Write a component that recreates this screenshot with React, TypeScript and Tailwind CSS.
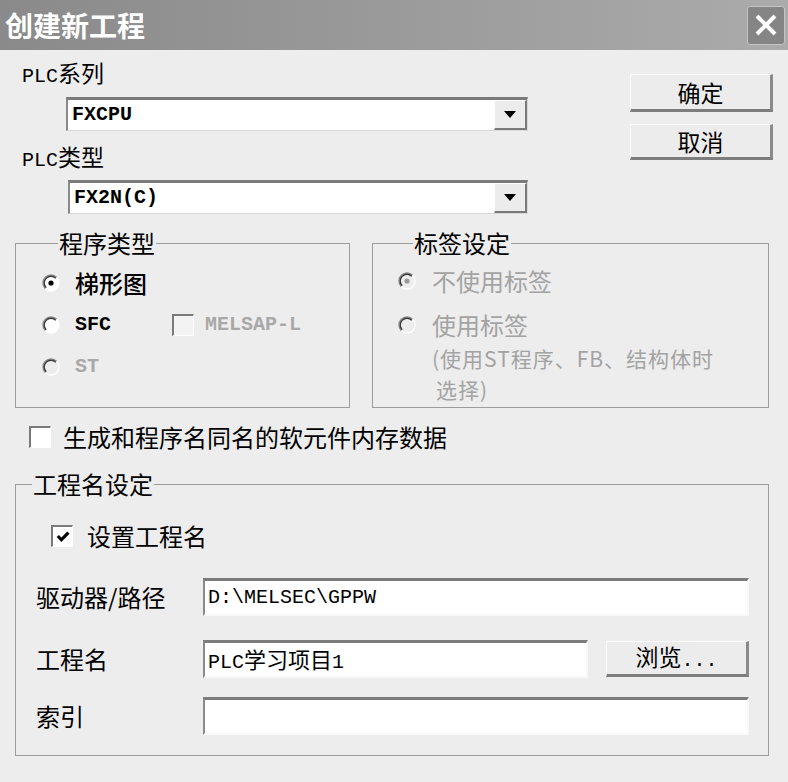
import React from "react";

const MONO = "font-['Liberation_Mono',monospace]";

function Radio({ checked = false, disabled = false }: { checked?: boolean; disabled?: boolean }) {
  return (
    <svg width="18" height="18" viewBox="0 0 18 18" className="shrink-0">
      <circle cx="9" cy="9" r="8" fill={disabled ? "#ededed" : "#ffffff"} />
      <path d="M14.66 3.34 A8 8 0 0 0 3.34 14.66" stroke="#8a8a8a" strokeWidth="1.4" fill="none" />
      <path d="M13.81 4.19 A6.8 6.8 0 0 0 4.19 13.81" stroke="#3c3c3c" strokeWidth="1.4" fill="none" />
      <path d="M3.34 14.66 A8 8 0 0 0 14.66 3.34" stroke="#ffffff" strokeWidth="1.4" fill="none" />
      {checked && <circle cx="9" cy="9" r="2.6" fill={disabled ? "#9a9a9a" : "#000000"} />}
    </svg>
  );
}

function Check({ checked = false, disabled = false }: { checked?: boolean; disabled?: boolean }) {
  return (
    <div
      className={`w-[22px] h-[22px] shrink-0 flex items-center justify-center border-t-2 border-l-2 border-t-[#7a7a7a] border-l-[#7a7a7a] border-b border-r border-b-white border-r-white ${
        disabled ? "bg-[#f3f3f3]" : "bg-white"
      }`}
    >
      {checked && (
        <svg width="14" height="14" viewBox="0 0 14 14">
          <path d="M1.8 6 L5.4 9.8 L12.4 2.6" stroke="#000000" strokeWidth="3.2" fill="none" />
        </svg>
      )}
    </div>
  );
}

function Select({ value, className }: { value: string; className: string }) {
  return (
    <div
      className={`h-[34px] flex bg-white border-t-[3px] border-l-[2px] border-t-[#7a7a7a] border-l-[#8a8a8a] border-b border-r border-b-[#d8d8d8] border-r-[#d8d8d8] ${className}`}
    >
      <div className={`flex-1 flex items-center pl-[4px] text-[20px] font-bold leading-none ${MONO}`}>{value}</div>
      <div className="w-[33px] h-full flex items-center justify-center bg-[#ececec] border-t border-l border-t-white border-l-white border-b-2 border-r-2 border-b-[#7a7a7a] border-r-[#7a7a7a]">
        <svg width="12" height="7" viewBox="0 0 12 7">
          <path d="M0 0 H12 L6 7 Z" fill="#000000" />
        </svg>
      </div>
    </div>
  );
}

function Btn({ children, className }: { children: React.ReactNode; className: string }) {
  return (
    <div
      className={`flex items-center justify-center bg-[#ececec] border-t border-l border-t-white border-l-white border-b-[3px] border-r-[3px] border-b-[#7d7d7d] border-r-[#8a8a8a] text-[23px] leading-none ${className}`}
    >
      {children}
    </div>
  );
}

function Input({ children, className }: { children?: React.ReactNode; className: string }) {
  return (
    <div
      className={`h-[38px] flex items-center pl-[3px] bg-white border-t-[3px] border-l-[2px] border-t-[#7b7b7b] border-l-[#8a8a8a] border-b-2 border-r-2 border-b-[#f8f8f8] border-r-[#f8f8f8] text-[20px] leading-none ${className}`}
    >
      {children}
    </div>
  );
}

export default function App() {
  return (
    <div className="w-[788px] h-[782px] overflow-hidden bg-[#ededed] text-black font-['Noto_Sans_CJK_SC',sans-serif]">
      {/* Title bar */}
      <div className="h-[50px] flex items-center justify-between pl-[5px] pr-[3px] bg-gradient-to-r from-[#8a8a8a] to-[#ababab]">
        <span className="text-white text-[28px] font-bold leading-none">创建新工程</span>
        <div className="w-[38px] h-[39px] flex items-center justify-center rounded-[3px] border border-[#c4c4c4] bg-[#858585]">
          <svg width="24" height="24" viewBox="0 0 24 24">
            <path d="M3 3 L21 21 M21 3 L3 21" stroke="#ffffff" strokeWidth="4" />
          </svg>
        </div>
      </div>

      {/* Top section */}
      <div className="flex">
        <div className="w-[540px] pl-[22px] pt-[12px]">
          <div className="h-[24px] flex items-center text-[23px] leading-none">
            <span>
              <span className={`${MONO} text-[20px]`}>PLC</span>系列
            </span>
          </div>
          <Select className="ml-[44px] mt-[11px] w-[462px]" value="FXCPU" />
          <div className="mt-[15px] h-[24px] flex items-center text-[23px] leading-none">
            <span>
              <span className={`${MONO} text-[20px]`}>PLC</span>类型
            </span>
          </div>
          <Select className="ml-[46px] mt-[10px] w-[460px]" value="FX2N(C)" />
        </div>
        <div className="pl-[90px] pt-[24px] flex flex-col gap-[12px]">
          <Btn className="w-[143px] h-[38px]">确定</Btn>
          <Btn className="w-[143px] h-[36px]">取消</Btn>
        </div>
      </div>

      {/* Group boxes row */}
      <div className="flex gap-[22px] pl-[15px] mt-[16px]">
        <fieldset className="w-[335px] h-[178px] border border-[#9c9c9c] pl-[26px]">
          <legend className="ml-[16px] px-[1px] h-[26px] text-[24px] leading-[26px]">程序类型</legend>
          <div className="pt-[12px] flex flex-col gap-[12px]">
            <div className="h-[30px] flex items-center gap-[15px]">
              <Radio checked />
              <span className="text-[24px] leading-none font-medium">梯形图</span>
            </div>
            <div className="h-[30px] flex items-center">
              <div className="w-[130px] flex items-center gap-[15px]">
                <Radio />
                <span className={`${MONO} text-[20px] font-bold leading-none`}>SFC</span>
              </div>
              <Check disabled />
              <span className={`${MONO} ml-[11px] text-[20px] font-bold leading-none text-[#a8a8a8]`}>MELSAP-L</span>
            </div>
            <div className="h-[30px] flex items-center gap-[15px]">
              <Radio disabled />
              <span className={`${MONO} text-[20px] font-bold leading-none text-[#a8a8a8]`}>ST</span>
            </div>
          </div>
        </fieldset>

        <fieldset className="w-[397px] h-[178px] border border-[#9c9c9c] pl-[25px]">
          <legend className="ml-[15px] px-[1px] h-[26px] text-[24px] leading-[26px]">标签设定</legend>
          <div className="pt-[10px] flex flex-col text-[#a3a3a3]">
            <div className="h-[30px] flex items-center gap-[16px]">
              <Radio checked disabled />
              <span className="text-[24px] leading-none">不使用标签</span>
            </div>
            <div className="mt-[14px] h-[30px] flex items-center gap-[16px]">
              <Radio disabled />
              <span className="text-[24px] leading-none">使用标签</span>
            </div>
            <div className="pl-[34px] text-[21px] leading-[31px] tracking-[1px] mt-[3px]">
              <div>(使用ST程序、FB、结构体时</div>
              <div className="pl-[4px]">选择)</div>
            </div>
          </div>
        </fieldset>
      </div>

      {/* Checkbox row */}
      <div className="mt-[14px] h-[30px] pl-[29px] flex items-center gap-[12px]">
        <Check />
        <span className="text-[24px] leading-none">生成和程序名同名的软元件内存数据</span>
      </div>

      {/* Project name group */}
      <div className="pl-[15px] mt-[19px]">
        <fieldset className="w-[754px] border border-[#9c9c9c] pb-[20px]">
          <legend className="ml-[16px] px-[1px] h-[26px] text-[24px] leading-[26px]">工程名设定</legend>
          <div className="pt-[24px] pl-[35px] h-[54px] flex items-center gap-[14px]">
            <Check checked />
            <span className="text-[24px] leading-none">设置工程名</span>
          </div>
          <div className="pl-[20px] mt-[27px] flex items-center">
            <span className="w-[167px] text-[24px] leading-none">驱动器/路径</span>
            <Input className={`w-[546px] ${MONO}`}>D:\MELSEC\GPPW</Input>
          </div>
          <div className="pl-[20px] mt-[24px] flex items-center">
            <span className="w-[167px] text-[24px] leading-none">工程名</span>
            <Input className="w-[385px]">
              <span>
                <span className={MONO}>PLC</span>
                <span className="text-[22px]">学习项目</span>
                <span className={MONO}>1</span>
              </span>
            </Input>
            <Btn className="ml-[18px] w-[143px] h-[36px]">
              <span>
                浏览<span className={`${MONO} text-[20px]`}>...</span>
              </span>
            </Btn>
          </div>
          <div className="pl-[20px] mt-[19px] flex items-center">
            <span className="w-[167px] text-[24px] leading-none">索引</span>
            <Input className="w-[546px]" />
          </div>
        </fieldset>
      </div>
    </div>
  );
}
